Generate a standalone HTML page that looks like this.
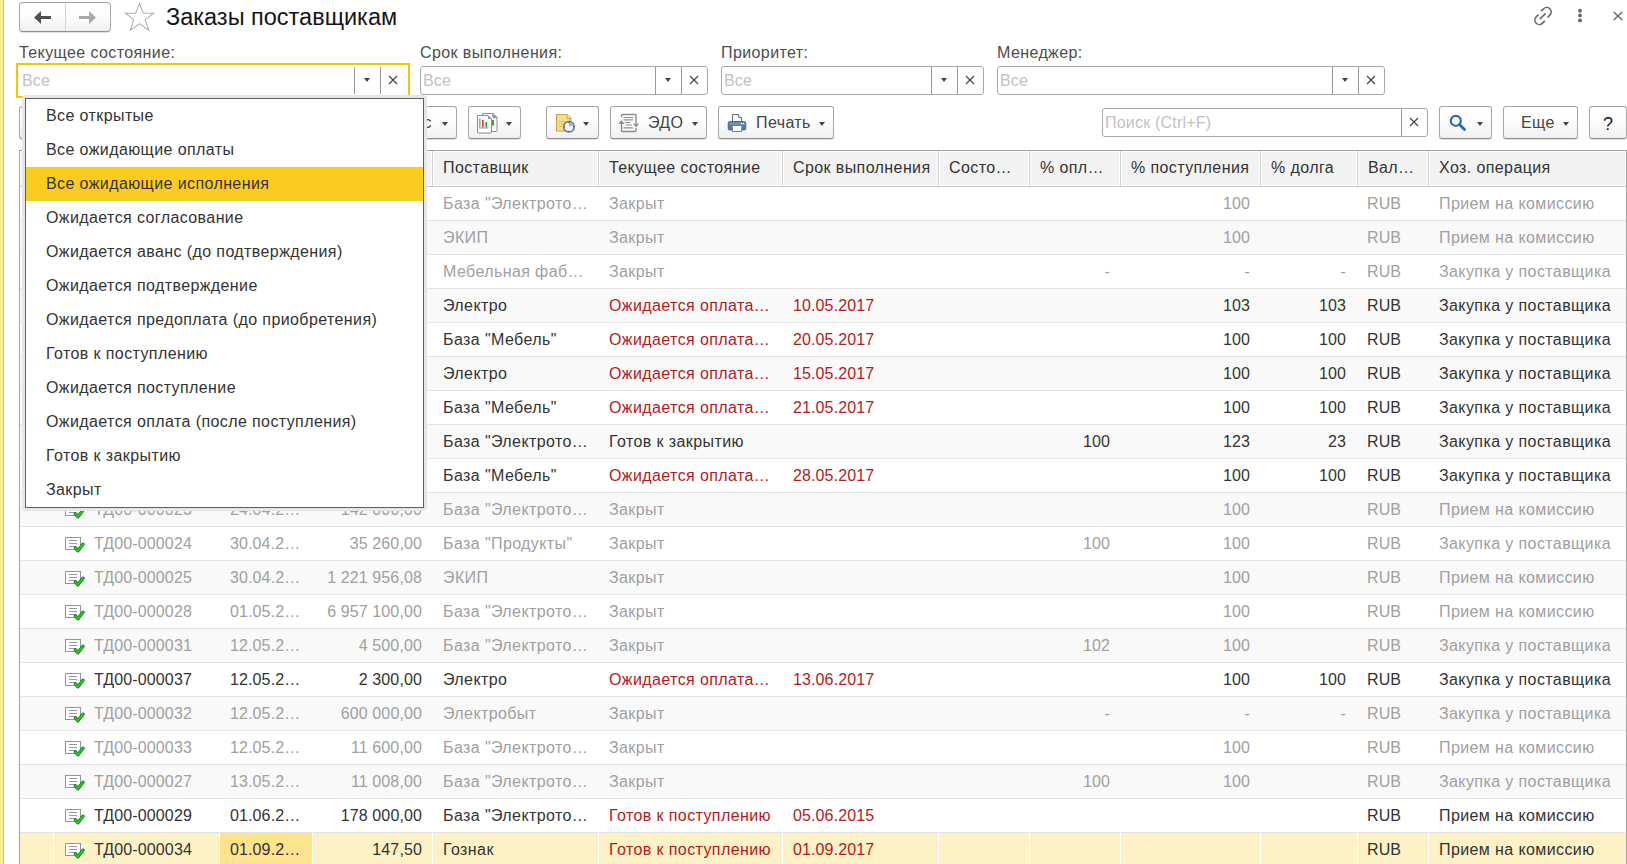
<!DOCTYPE html>
<html><head><meta charset="utf-8"><title>Заказы поставщикам</title>
<style>
*{box-sizing:border-box;margin:0;padding:0}
html,body{width:1627px;height:864px;overflow:hidden;background:#fff}
body{position:relative;font-family:"Liberation Sans",sans-serif;font-size:16px;color:#333}
.abs{position:absolute}
.t{position:absolute;white-space:nowrap;letter-spacing:0.4px;line-height:20px}
.n{letter-spacing:0.12px}
.lbl{position:absolute;white-space:nowrap;letter-spacing:0.4px;color:#4d4d4d;line-height:20px}
.fld{position:absolute;border:1px solid #a8a8a8;border-radius:3px;background:#fff;height:29px}
.fld .ph{position:absolute;left:2px;top:4px;color:#c2c2c2;letter-spacing:0.2px;line-height:20px}
.fld .dv{position:absolute;top:1px;width:1px;height:25px;background:#9a9a9a}
.tri{position:absolute;width:0;height:0;border-left:3px solid transparent;border-right:3px solid transparent;border-top:4px solid #444}
.btn{position:absolute;border:1px solid #a6a6a6;border-bottom-color:#8f8f8f;border-radius:3px;background:linear-gradient(#fff 0%,#fdfdfd 45%,#f0f0f0 100%);box-shadow:0 1px 0 rgba(0,0,0,0.12);height:33px}
.btn .bt{position:absolute;top:6px;white-space:nowrap;color:#444;letter-spacing:0.4px;line-height:20px}
.hdr{position:absolute;top:151px;height:35px;background:#f2f2f2;border:1px solid #fff}
.hsep{position:absolute;top:151px;width:1px;height:35px;background:#d0d0d0}
.row{position:absolute;left:20px;width:1606px;height:34px}
.g{color:#a0a0a0}
.k{color:#333}
.r{color:#b5191d}
</style></head><body>

<div class="abs" style="left:0;top:0;width:3px;height:864px;background:#fbeb9b"></div>
<div class="abs" style="left:3px;top:0;width:1px;height:864px;background:#cfc487"></div>
<div class="btn" style="left:19px;top:2px;width:92px;height:30px;border-radius:4px"></div>
<div class="abs" style="left:65px;top:3px;width:1px;height:28px;background:#d6d6d6"></div>
<svg class="abs" style="left:33px;top:10px" width="20" height="15" viewBox="0 0 20 15"><path d="M1 7.5 L8 1 L8 6 L18 6 L18 9 L8 9 L8 14 Z" fill="#505050"/></svg>
<svg class="abs" style="left:78px;top:10px" width="20" height="15" viewBox="0 0 20 15"><path d="M18 7.5 L11 1 L11 6 L1 6 L1 9 L11 9 L11 14 Z" fill="#a8a8a8"/></svg>
<svg class="abs" style="left:124px;top:2px" width="32" height="30" viewBox="0 0 32 30"><path d="M15.5 1.5 L19.2 11.3 L29.5 11.3 L21.3 17.6 L24.6 28.2 L15.5 21.7 L6.4 28.2 L9.7 17.6 L1.5 11.3 L11.8 11.3 Z" fill="none" stroke="#a9b1b9" stroke-width="1.1"/></svg>
<div class="t" style="left:166px;top:3px;font-size:23.5px;line-height:28px;color:#141414;letter-spacing:0">Заказы поставщикам</div>
<svg class="abs" style="left:1532px;top:5px" width="22" height="22" viewBox="0 0 22 22"><g transform="translate(11 11) scale(0.88) translate(-10.75 -10.7)" fill="none" stroke="#6a6a6a" stroke-width="1.9" stroke-linecap="butt"><path d="M8.5 5.2 L11.3 2.6 A3.6 3.6 0 0 1 18.6 9.6 L16 12.2"/><path d="M12.8 16.2 L10.2 18.8 A3.6 3.6 0 0 1 2.9 11.8 L5.5 9.2"/><path d="M7.2 14.2 L13.8 7.6"/></g></svg>
<svg class="abs" style="left:1576px;top:7px" width="8" height="17" viewBox="0 0 8 17"><circle cx="4" cy="3.7" r="1.95" fill="#6a6a6a"/><circle cx="4" cy="8.4" r="1.95" fill="#6a6a6a"/><circle cx="4" cy="13.4" r="1.95" fill="#6a6a6a"/></svg>
<svg class="abs" style="left:1612px;top:10px" width="12" height="12" viewBox="0 0 12 12"><path d="M1.8 1.9 L10.2 10.1 M10.2 1.9 L1.8 10.1" stroke="#6a6a6a" stroke-width="1.4"/></svg>
<div class="lbl" style="left:19px;top:43px">Текущее состояние:</div>
<div class="lbl" style="left:420px;top:43px">Срок выполнения:</div>
<div class="lbl" style="left:721px;top:43px">Приоритет:</div>
<div class="lbl" style="left:997px;top:43px">Менеджер:</div>
<div class="abs" style="left:16px;top:63px;width:394px;height:35px;border:2px solid #f8c600;background:#fff"></div>
<div class="abs" style="left:22px;top:71px;color:#c2c2c2;letter-spacing:0.2px;line-height:20px">Все</div>
<div class="abs" style="left:354px;top:67px;width:1px;height:27px;background:#9a9a9a"></div>
<div class="abs" style="left:380px;top:67px;width:1px;height:27px;background:#9a9a9a"></div>
<div class="tri" style="left:364px;top:78px"></div>
<svg class="abs" style="left:388px;top:75px" width="10" height="10" viewBox="0 0 10 10"><path d="M1 1 L9 9 M9 1 L1 9" stroke="#444" stroke-width="1.15"/></svg>
<div class="fld" style="left:420px;top:66px;width:288px"><div class="ph">Все</div></div>
<div class="abs" style="left:655px;top:67px;width:1px;height:27px;background:#9a9a9a"></div>
<div class="abs" style="left:681px;top:67px;width:1px;height:27px;background:#9a9a9a"></div>
<div class="tri" style="left:665px;top:78px"></div>
<svg class="abs" style="left:689px;top:75px" width="10" height="10" viewBox="0 0 10 10"><path d="M1 1 L9 9 M9 1 L1 9" stroke="#444" stroke-width="1.15"/></svg>
<div class="fld" style="left:721px;top:66px;width:263px"><div class="ph">Все</div></div>
<div class="abs" style="left:931px;top:67px;width:1px;height:27px;background:#9a9a9a"></div>
<div class="abs" style="left:957px;top:67px;width:1px;height:27px;background:#9a9a9a"></div>
<div class="tri" style="left:941px;top:78px"></div>
<svg class="abs" style="left:965px;top:75px" width="10" height="10" viewBox="0 0 10 10"><path d="M1 1 L9 9 M9 1 L1 9" stroke="#444" stroke-width="1.15"/></svg>
<div class="fld" style="left:997px;top:66px;width:388px"><div class="ph">Все</div></div>
<div class="abs" style="left:1332px;top:67px;width:1px;height:27px;background:#9a9a9a"></div>
<div class="abs" style="left:1358px;top:67px;width:1px;height:27px;background:#9a9a9a"></div>
<div class="tri" style="left:1342px;top:78px"></div>
<svg class="abs" style="left:1366px;top:75px" width="10" height="10" viewBox="0 0 10 10"><path d="M1 1 L9 9 M9 1 L1 9" stroke="#444" stroke-width="1.15"/></svg>
<div class="btn" style="left:19px;top:106px;width:438px"><div class="bt" style="right:24px">Статус</div><div class="tri" style="left:422px;top:15px"></div></div>
<div class="btn" style="left:468px;top:106px;width:53px"><div class="tri" style="left:37px;top:15px"></div></div>
<div class="btn" style="left:546px;top:106px;width:53px"><div class="tri" style="left:36px;top:15px"></div></div>
<div class="btn" style="left:610px;top:106px;width:97px"><div class="bt" style="left:37px">ЭДО</div><div class="tri" style="left:81px;top:15px"></div></div>
<div class="btn" style="left:718px;top:106px;width:116px"><div class="bt" style="left:37px">Печать</div><div class="tri" style="left:100px;top:15px"></div></div>
<div class="btn" style="left:1439px;top:106px;width:53px"><div class="tri" style="left:37px;top:15px"></div></div>
<div class="btn" style="left:1503px;top:106px;width:75px"><div class="bt" style="left:17px">Еще</div><div class="tri" style="left:59px;top:15px"></div></div>
<div class="btn" style="left:1589px;top:106px;width:38px"><div class="bt" style="left:13px;top:7px;color:#1a1a1a;font-size:18px;letter-spacing:0">?</div></div>
<svg class="abs" style="left:476px;top:112px" width="23" height="22" viewBox="0 0 23 22">
<path d="M6.5 1.5 H17 L21 5.5 V18.5 Q21 19.5 20 19.5 H7.5 Q6.5 19.5 6.5 18.5 Z" fill="#fff" stroke="#7f8e9c" stroke-width="1"/>
<path d="M17 1.5 V5.5 H21" fill="#8a98a6" stroke="#7f8e9c" stroke-width="1"/>
<rect x="16" y="8" width="2" height="6" fill="#3ea33e"/><rect x="14" y="13" width="5" height="1" fill="#bbb"/>
<path d="M1.5 3.5 H12 L15.5 7 V20 Q15.5 21 14.5 21 H2.5 Q1.5 21 1.5 20 Z" fill="#fff" stroke="#7f8e9c" stroke-width="1"/>
<path d="M12 3.5 V7 H15.5 Z" fill="#8a98a6"/>
<rect x="3" y="6.5" width="1.6" height="9" fill="#a4a4a4"/>
<rect x="6" y="8" width="1.6" height="7.5" fill="#e8352a"/>
<rect x="9.5" y="10" width="1.6" height="5.5" fill="#2fa22f"/>
<rect x="3" y="15.5" width="9" height="1" fill="#999"/>
</svg>
<svg class="abs" style="left:555px;top:113px" width="22" height="20" viewBox="0 0 22 20">
<path d="M1.5 1.5 H12 L16 5.5 V17 Q16 18 15 18 H2.5 Q1.5 18 1.5 17 Z" fill="#f3df8c" stroke="#c9a746" stroke-width="1.2"/>
<path d="M12 1.5 V5.5 H16" fill="#f7e9ab" stroke="#c9a746" stroke-width="1"/>
<path d="M4 8.5 H6 M7 8.5 H10 M4 11 H5 M6 11 H8 M4 13.5 H7" stroke="#cdb56a" stroke-width="0.9"/>
<circle cx="14" cy="13.8" r="5.3" fill="#fff" stroke="#3d79b0" stroke-width="1.4"/>
<path d="M14 13.8 V9.5 A4.3 4.3 0 0 1 18.1 12.6 Z" fill="#9bb8df"/>
<circle cx="14" cy="9.3" r="0.9" fill="#e03a3a"/><circle cx="14" cy="18.3" r="0.9" fill="#e03a3a"/>
<circle cx="9.5" cy="13.8" r="0.9" fill="#e03a3a"/><circle cx="18.5" cy="13.8" r="0.9" fill="#e03a3a"/>
</svg>
<svg class="abs" style="left:618px;top:113px" width="22" height="20" viewBox="0 0 22 20">
<g fill="none" stroke="#8c8c8c" stroke-width="1.4">
<path d="M3.5 4 V2.5 Q3.5 1.5 4.5 1.5 H17 Q18 1.5 18 2.5 V10"/>
<path d="M18 15 V17.5 Q18 18.5 17 18.5 H4.5 Q3.5 18.5 3.5 17.5 V10"/>
</g>
<path d="M0.5 11 L3.5 7 L6.5 11 Z" fill="#8c8c8c"/>
<path d="M15 10.5 L18 14.5 L21 10.5 Z" fill="#8c8c8c"/>
<path d="M5.5 4.5 H15 M5.5 6.8 H15 M7 9.5 H12.5 M7.5 12 H14 M5.5 14.8 H15" stroke="#8f8f8f" stroke-width="1.2"/>
</svg>
<svg class="abs" style="left:727px;top:113px" width="20" height="20" viewBox="0 0 20 20">
<path d="M5.5 1.5 H11.5 L14.5 4.5 V9 H5.5 Z" fill="#fff" stroke="#5a6f86" stroke-width="1"/>
<path d="M11.5 1.5 V4.5 H14.5" fill="#fff" stroke="#5a6f86" stroke-width="0.9"/>
<rect x="1.2" y="8.5" width="17.6" height="8.5" rx="1.5" fill="#5479a3" stroke="#3f5f85" stroke-width="0.8"/>
<rect x="2.5" y="9.5" width="15" height="2.5" fill="#6f93bb"/>
<circle cx="14.4" cy="10.5" r="0.8" fill="#fff"/><circle cx="16.4" cy="10.5" r="0.8" fill="#fff"/>
<path d="M5 12.5 H15 L14.5 18.5 H5.5 Z" fill="#fff" stroke="#5a6f86" stroke-width="0.9"/>
</svg>
<svg class="abs" style="left:1449px;top:114px" width="18" height="18" viewBox="0 0 18 18">
<circle cx="6.8" cy="6.8" r="5" fill="none" stroke="#2a6aa6" stroke-width="2.2"/>
<path d="M10.5 10.5 L15.5 15.5" stroke="#2a6aa6" stroke-width="2.8" stroke-linecap="round"/>
</svg>
<div class="fld" style="left:1102px;top:108px;width:326px;height:29px"><div class="ph" style="left:2px;top:4px">Поиск (Ctrl+F)</div></div>
<div class="abs" style="left:1401px;top:109px;width:1px;height:27px;background:#9a9a9a"></div>
<svg class="abs" style="left:1409px;top:117px" width="10" height="10" viewBox="0 0 10 10"><path d="M1 1 L9 9 M9 1 L1 9" stroke="#444" stroke-width="1.15"/></svg>
<div class="abs" style="left:19px;top:150px;width:1608px;height:724px;border:1px solid #a2a2a2;border-bottom:none;background:#fff"></div>
<div class="hdr" style="left:20px;width:33px"></div>
<div class="hdr" style="left:54px;width:165px"></div>
<div class="hdr" style="left:220px;width:92px"></div>
<div class="hdr" style="left:313px;width:119px"></div>
<div class="hdr" style="left:433px;width:165px"></div>
<div class="hdr" style="left:599px;width:183px"></div>
<div class="hdr" style="left:783px;width:155px"></div>
<div class="hdr" style="left:939px;width:90px"></div>
<div class="hdr" style="left:1030px;width:90px"></div>
<div class="hdr" style="left:1121px;width:139px"></div>
<div class="hdr" style="left:1261px;width:96px"></div>
<div class="hdr" style="left:1358px;width:70px"></div>
<div class="hdr" style="left:1429px;width:197px"></div>
<div class="hsep" style="left:53px"></div>
<div class="hsep" style="left:219px"></div>
<div class="hsep" style="left:312px"></div>
<div class="hsep" style="left:432px"></div>
<div class="hsep" style="left:598px"></div>
<div class="hsep" style="left:782px"></div>
<div class="hsep" style="left:938px"></div>
<div class="hsep" style="left:1029px"></div>
<div class="hsep" style="left:1120px"></div>
<div class="hsep" style="left:1260px"></div>
<div class="hsep" style="left:1357px"></div>
<div class="hsep" style="left:1428px"></div>
<div class="abs" style="left:20px;top:186px;width:1606px;height:1px;background:#c9c9c9"></div>
<div class="t" style="left:443px;top:158px;color:#333">Поставщик</div>
<div class="t" style="left:609px;top:158px;color:#333">Текущее состояние</div>
<div class="t" style="left:793px;top:158px;color:#333">Срок выполнения</div>
<div class="t" style="left:949px;top:158px;color:#333">Состо…</div>
<div class="t" style="left:1040px;top:158px;color:#333">% опл…</div>
<div class="t" style="left:1131px;top:158px;color:#333">% поступления</div>
<div class="t" style="left:1271px;top:158px;color:#333">% долга</div>
<div class="t" style="left:1368px;top:158px;color:#333">Вал…</div>
<div class="t" style="left:1439px;top:158px;color:#333">Хоз. операция</div>
<div class="t" style="left:64px;top:158px;color:#333">Номер</div>
<div class="t" style="left:230px;top:158px;color:#333">Дата</div>
<div class="t" style="left:323px;top:158px;color:#333">Сумма</div>
<div class="abs" style="left:20px;top:187px;width:1606px;height:33px;background:#fff"></div>
<div class="abs" style="left:20px;top:220px;width:1606px;height:1px;background:#e4e4e4"></div>
<svg class="abs" style="left:65px;top:197px" width="21" height="16" viewBox="0 0 21 16"><rect x="0.5" y="0.5" width="15" height="12" fill="#fff" stroke="#8797ad" stroke-width="1"/><path d="M4 3.5 H12 M4 6.5 H12 M4 9.5 H10" stroke="#8e9aab" stroke-width="1.1"/><path d="M10.5 10.9 L12.9 13.7 L18 7.3" fill="none" stroke="#0c7d0c" stroke-width="3.4" stroke-linecap="round" stroke-linejoin="round"/><path d="M10.5 10.9 L12.9 13.7 L18 7.3" fill="none" stroke="#2cc22c" stroke-width="2" stroke-linecap="round" stroke-linejoin="round"/></svg>
<div class="t n g" style="left:94px;top:194px">ТД00-000019</div>
<div class="t n g" style="left:230px;top:194px">19.04.2…</div>
<div class="t n g" style="right:1205px;top:194px">50 000,00</div>
<div class="t g" style="left:443px;top:194px">База &quot;Электрото…</div>
<div class="t g" style="left:609px;top:194px">Закрыт</div>
<div class="t n g" style="right:377px;top:194px">100</div>
<div class="t n g" style="left:1367px;top:194px">RUB</div>
<div class="t g" style="left:1439px;top:194px">Прием на комиссию</div>
<div class="abs" style="left:20px;top:221px;width:1606px;height:33px;background:#f9f9f9"></div>
<div class="abs" style="left:20px;top:254px;width:1606px;height:1px;background:#e4e4e4"></div>
<svg class="abs" style="left:65px;top:231px" width="21" height="16" viewBox="0 0 21 16"><rect x="0.5" y="0.5" width="15" height="12" fill="#fff" stroke="#8797ad" stroke-width="1"/><path d="M4 3.5 H12 M4 6.5 H12 M4 9.5 H10" stroke="#8e9aab" stroke-width="1.1"/><path d="M10.5 10.9 L12.9 13.7 L18 7.3" fill="none" stroke="#0c7d0c" stroke-width="3.4" stroke-linecap="round" stroke-linejoin="round"/><path d="M10.5 10.9 L12.9 13.7 L18 7.3" fill="none" stroke="#2cc22c" stroke-width="2" stroke-linecap="round" stroke-linejoin="round"/></svg>
<div class="t n g" style="left:94px;top:228px">ТД00-000020</div>
<div class="t n g" style="left:230px;top:228px">20.04.2…</div>
<div class="t n g" style="right:1205px;top:228px">12 000,00</div>
<div class="t g" style="left:443px;top:228px">ЭКИП</div>
<div class="t g" style="left:609px;top:228px">Закрыт</div>
<div class="t n g" style="right:377px;top:228px">100</div>
<div class="t n g" style="left:1367px;top:228px">RUB</div>
<div class="t g" style="left:1439px;top:228px">Прием на комиссию</div>
<div class="abs" style="left:20px;top:255px;width:1606px;height:33px;background:#fff"></div>
<div class="abs" style="left:20px;top:288px;width:1606px;height:1px;background:#e4e4e4"></div>
<svg class="abs" style="left:65px;top:265px" width="21" height="16" viewBox="0 0 21 16"><rect x="0.5" y="0.5" width="15" height="12" fill="#fff" stroke="#8797ad" stroke-width="1"/><path d="M4 3.5 H12 M4 6.5 H12 M4 9.5 H10" stroke="#8e9aab" stroke-width="1.1"/><path d="M10.5 10.9 L12.9 13.7 L18 7.3" fill="none" stroke="#0c7d0c" stroke-width="3.4" stroke-linecap="round" stroke-linejoin="round"/><path d="M10.5 10.9 L12.9 13.7 L18 7.3" fill="none" stroke="#2cc22c" stroke-width="2" stroke-linecap="round" stroke-linejoin="round"/></svg>
<div class="t n g" style="left:94px;top:262px">ТД00-000021</div>
<div class="t n g" style="left:230px;top:262px">21.04.2…</div>
<div class="t n g" style="right:1205px;top:262px">8 000,00</div>
<div class="t g" style="left:443px;top:262px">Мебельная фаб…</div>
<div class="t g" style="left:609px;top:262px">Закрыт</div>
<div class="t n g" style="right:517px;top:262px">-</div>
<div class="t n g" style="right:377px;top:262px">-</div>
<div class="t n g" style="right:281px;top:262px">-</div>
<div class="t n g" style="left:1367px;top:262px">RUB</div>
<div class="t g" style="left:1439px;top:262px">Закупка у поставщика</div>
<div class="abs" style="left:20px;top:289px;width:1606px;height:33px;background:#f9f9f9"></div>
<div class="abs" style="left:20px;top:322px;width:1606px;height:1px;background:#e4e4e4"></div>
<svg class="abs" style="left:65px;top:299px" width="21" height="16" viewBox="0 0 21 16"><rect x="0.5" y="0.5" width="15" height="12" fill="#fff" stroke="#8797ad" stroke-width="1"/><path d="M4 3.5 H12 M4 6.5 H12 M4 9.5 H10" stroke="#8e9aab" stroke-width="1.1"/><path d="M10.5 10.9 L12.9 13.7 L18 7.3" fill="none" stroke="#0c7d0c" stroke-width="3.4" stroke-linecap="round" stroke-linejoin="round"/><path d="M10.5 10.9 L12.9 13.7 L18 7.3" fill="none" stroke="#2cc22c" stroke-width="2" stroke-linecap="round" stroke-linejoin="round"/></svg>
<div class="t n k" style="left:94px;top:296px">ТД00-000001</div>
<div class="t n k" style="left:230px;top:296px">22.04.2…</div>
<div class="t n k" style="right:1205px;top:296px">10 000,00</div>
<div class="t k" style="left:443px;top:296px">Электро</div>
<div class="t r" style="left:609px;top:296px">Ожидается оплата…</div>
<div class="t n r" style="left:793px;top:296px">10.05.2017</div>
<div class="t n k" style="right:377px;top:296px">103</div>
<div class="t n k" style="right:281px;top:296px">103</div>
<div class="t n k" style="left:1367px;top:296px">RUB</div>
<div class="t k" style="left:1439px;top:296px">Закупка у поставщика</div>
<div class="abs" style="left:20px;top:323px;width:1606px;height:33px;background:#fff"></div>
<div class="abs" style="left:20px;top:356px;width:1606px;height:1px;background:#e4e4e4"></div>
<svg class="abs" style="left:65px;top:333px" width="21" height="16" viewBox="0 0 21 16"><rect x="0.5" y="0.5" width="15" height="12" fill="#fff" stroke="#8797ad" stroke-width="1"/><path d="M4 3.5 H12 M4 6.5 H12 M4 9.5 H10" stroke="#8e9aab" stroke-width="1.1"/><path d="M10.5 10.9 L12.9 13.7 L18 7.3" fill="none" stroke="#0c7d0c" stroke-width="3.4" stroke-linecap="round" stroke-linejoin="round"/><path d="M10.5 10.9 L12.9 13.7 L18 7.3" fill="none" stroke="#2cc22c" stroke-width="2" stroke-linecap="round" stroke-linejoin="round"/></svg>
<div class="t n k" style="left:94px;top:330px">ТД00-000002</div>
<div class="t n k" style="left:230px;top:330px">22.04.2…</div>
<div class="t n k" style="right:1205px;top:330px">10 000,00</div>
<div class="t k" style="left:443px;top:330px">База &quot;Мебель&quot;</div>
<div class="t r" style="left:609px;top:330px">Ожидается оплата…</div>
<div class="t n r" style="left:793px;top:330px">20.05.2017</div>
<div class="t n k" style="right:377px;top:330px">100</div>
<div class="t n k" style="right:281px;top:330px">100</div>
<div class="t n k" style="left:1367px;top:330px">RUB</div>
<div class="t k" style="left:1439px;top:330px">Закупка у поставщика</div>
<div class="abs" style="left:20px;top:357px;width:1606px;height:33px;background:#f9f9f9"></div>
<div class="abs" style="left:20px;top:390px;width:1606px;height:1px;background:#e4e4e4"></div>
<svg class="abs" style="left:65px;top:367px" width="21" height="16" viewBox="0 0 21 16"><rect x="0.5" y="0.5" width="15" height="12" fill="#fff" stroke="#8797ad" stroke-width="1"/><path d="M4 3.5 H12 M4 6.5 H12 M4 9.5 H10" stroke="#8e9aab" stroke-width="1.1"/><path d="M10.5 10.9 L12.9 13.7 L18 7.3" fill="none" stroke="#0c7d0c" stroke-width="3.4" stroke-linecap="round" stroke-linejoin="round"/><path d="M10.5 10.9 L12.9 13.7 L18 7.3" fill="none" stroke="#2cc22c" stroke-width="2" stroke-linecap="round" stroke-linejoin="round"/></svg>
<div class="t n k" style="left:94px;top:364px">ТД00-000003</div>
<div class="t n k" style="left:230px;top:364px">22.04.2…</div>
<div class="t n k" style="right:1205px;top:364px">10 000,00</div>
<div class="t k" style="left:443px;top:364px">Электро</div>
<div class="t r" style="left:609px;top:364px">Ожидается оплата…</div>
<div class="t n r" style="left:793px;top:364px">15.05.2017</div>
<div class="t n k" style="right:377px;top:364px">100</div>
<div class="t n k" style="right:281px;top:364px">100</div>
<div class="t n k" style="left:1367px;top:364px">RUB</div>
<div class="t k" style="left:1439px;top:364px">Закупка у поставщика</div>
<div class="abs" style="left:20px;top:391px;width:1606px;height:33px;background:#fff"></div>
<div class="abs" style="left:20px;top:424px;width:1606px;height:1px;background:#e4e4e4"></div>
<svg class="abs" style="left:65px;top:401px" width="21" height="16" viewBox="0 0 21 16"><rect x="0.5" y="0.5" width="15" height="12" fill="#fff" stroke="#8797ad" stroke-width="1"/><path d="M4 3.5 H12 M4 6.5 H12 M4 9.5 H10" stroke="#8e9aab" stroke-width="1.1"/><path d="M10.5 10.9 L12.9 13.7 L18 7.3" fill="none" stroke="#0c7d0c" stroke-width="3.4" stroke-linecap="round" stroke-linejoin="round"/><path d="M10.5 10.9 L12.9 13.7 L18 7.3" fill="none" stroke="#2cc22c" stroke-width="2" stroke-linecap="round" stroke-linejoin="round"/></svg>
<div class="t n k" style="left:94px;top:398px">ТД00-000004</div>
<div class="t n k" style="left:230px;top:398px">22.04.2…</div>
<div class="t n k" style="right:1205px;top:398px">10 000,00</div>
<div class="t k" style="left:443px;top:398px">База &quot;Мебель&quot;</div>
<div class="t r" style="left:609px;top:398px">Ожидается оплата…</div>
<div class="t n r" style="left:793px;top:398px">21.05.2017</div>
<div class="t n k" style="right:377px;top:398px">100</div>
<div class="t n k" style="right:281px;top:398px">100</div>
<div class="t n k" style="left:1367px;top:398px">RUB</div>
<div class="t k" style="left:1439px;top:398px">Закупка у поставщика</div>
<div class="abs" style="left:20px;top:425px;width:1606px;height:33px;background:#f9f9f9"></div>
<div class="abs" style="left:20px;top:458px;width:1606px;height:1px;background:#e4e4e4"></div>
<svg class="abs" style="left:65px;top:435px" width="21" height="16" viewBox="0 0 21 16"><rect x="0.5" y="0.5" width="15" height="12" fill="#fff" stroke="#8797ad" stroke-width="1"/><path d="M4 3.5 H12 M4 6.5 H12 M4 9.5 H10" stroke="#8e9aab" stroke-width="1.1"/><path d="M10.5 10.9 L12.9 13.7 L18 7.3" fill="none" stroke="#0c7d0c" stroke-width="3.4" stroke-linecap="round" stroke-linejoin="round"/><path d="M10.5 10.9 L12.9 13.7 L18 7.3" fill="none" stroke="#2cc22c" stroke-width="2" stroke-linecap="round" stroke-linejoin="round"/></svg>
<div class="t n k" style="left:94px;top:432px">ТД00-000005</div>
<div class="t n k" style="left:230px;top:432px">22.04.2…</div>
<div class="t n k" style="right:1205px;top:432px">10 000,00</div>
<div class="t k" style="left:443px;top:432px">База &quot;Электрото…</div>
<div class="t k" style="left:609px;top:432px">Готов к закрытию</div>
<div class="t n k" style="right:517px;top:432px">100</div>
<div class="t n k" style="right:377px;top:432px">123</div>
<div class="t n k" style="right:281px;top:432px">23</div>
<div class="t n k" style="left:1367px;top:432px">RUB</div>
<div class="t k" style="left:1439px;top:432px">Закупка у поставщика</div>
<div class="abs" style="left:20px;top:459px;width:1606px;height:33px;background:#fff"></div>
<div class="abs" style="left:20px;top:492px;width:1606px;height:1px;background:#e4e4e4"></div>
<svg class="abs" style="left:65px;top:469px" width="21" height="16" viewBox="0 0 21 16"><rect x="0.5" y="0.5" width="15" height="12" fill="#fff" stroke="#8797ad" stroke-width="1"/><path d="M4 3.5 H12 M4 6.5 H12 M4 9.5 H10" stroke="#8e9aab" stroke-width="1.1"/><path d="M10.5 10.9 L12.9 13.7 L18 7.3" fill="none" stroke="#0c7d0c" stroke-width="3.4" stroke-linecap="round" stroke-linejoin="round"/><path d="M10.5 10.9 L12.9 13.7 L18 7.3" fill="none" stroke="#2cc22c" stroke-width="2" stroke-linecap="round" stroke-linejoin="round"/></svg>
<div class="t n k" style="left:94px;top:466px">ТД00-000006</div>
<div class="t n k" style="left:230px;top:466px">22.04.2…</div>
<div class="t n k" style="right:1205px;top:466px">10 000,00</div>
<div class="t k" style="left:443px;top:466px">База &quot;Мебель&quot;</div>
<div class="t r" style="left:609px;top:466px">Ожидается оплата…</div>
<div class="t n r" style="left:793px;top:466px">28.05.2017</div>
<div class="t n k" style="right:377px;top:466px">100</div>
<div class="t n k" style="right:281px;top:466px">100</div>
<div class="t n k" style="left:1367px;top:466px">RUB</div>
<div class="t k" style="left:1439px;top:466px">Закупка у поставщика</div>
<div class="abs" style="left:20px;top:493px;width:1606px;height:33px;background:#f9f9f9"></div>
<div class="abs" style="left:20px;top:526px;width:1606px;height:1px;background:#e4e4e4"></div>
<svg class="abs" style="left:65px;top:503px" width="21" height="16" viewBox="0 0 21 16"><rect x="0.5" y="0.5" width="15" height="12" fill="#fff" stroke="#8797ad" stroke-width="1"/><path d="M4 3.5 H12 M4 6.5 H12 M4 9.5 H10" stroke="#8e9aab" stroke-width="1.1"/><path d="M10.5 10.9 L12.9 13.7 L18 7.3" fill="none" stroke="#0c7d0c" stroke-width="3.4" stroke-linecap="round" stroke-linejoin="round"/><path d="M10.5 10.9 L12.9 13.7 L18 7.3" fill="none" stroke="#2cc22c" stroke-width="2" stroke-linecap="round" stroke-linejoin="round"/></svg>
<div class="t n g" style="left:94px;top:500px">ТД00-000023</div>
<div class="t n g" style="left:230px;top:500px">24.04.2…</div>
<div class="t n g" style="right:1205px;top:500px">142 000,00</div>
<div class="t g" style="left:443px;top:500px">База &quot;Электрото…</div>
<div class="t g" style="left:609px;top:500px">Закрыт</div>
<div class="t n g" style="right:377px;top:500px">100</div>
<div class="t n g" style="left:1367px;top:500px">RUB</div>
<div class="t g" style="left:1439px;top:500px">Прием на комиссию</div>
<div class="abs" style="left:20px;top:527px;width:1606px;height:33px;background:#fff"></div>
<div class="abs" style="left:20px;top:560px;width:1606px;height:1px;background:#e4e4e4"></div>
<svg class="abs" style="left:65px;top:537px" width="21" height="16" viewBox="0 0 21 16"><rect x="0.5" y="0.5" width="15" height="12" fill="#fff" stroke="#8797ad" stroke-width="1"/><path d="M4 3.5 H12 M4 6.5 H12 M4 9.5 H10" stroke="#8e9aab" stroke-width="1.1"/><path d="M10.5 10.9 L12.9 13.7 L18 7.3" fill="none" stroke="#0c7d0c" stroke-width="3.4" stroke-linecap="round" stroke-linejoin="round"/><path d="M10.5 10.9 L12.9 13.7 L18 7.3" fill="none" stroke="#2cc22c" stroke-width="2" stroke-linecap="round" stroke-linejoin="round"/></svg>
<div class="t n g" style="left:94px;top:534px">ТД00-000024</div>
<div class="t n g" style="left:230px;top:534px">30.04.2…</div>
<div class="t n g" style="right:1205px;top:534px">35 260,00</div>
<div class="t g" style="left:443px;top:534px">База &quot;Продукты&quot;</div>
<div class="t g" style="left:609px;top:534px">Закрыт</div>
<div class="t n g" style="right:517px;top:534px">100</div>
<div class="t n g" style="right:377px;top:534px">100</div>
<div class="t n g" style="left:1367px;top:534px">RUB</div>
<div class="t g" style="left:1439px;top:534px">Закупка у поставщика</div>
<div class="abs" style="left:20px;top:561px;width:1606px;height:33px;background:#f9f9f9"></div>
<div class="abs" style="left:20px;top:594px;width:1606px;height:1px;background:#e4e4e4"></div>
<svg class="abs" style="left:65px;top:571px" width="21" height="16" viewBox="0 0 21 16"><rect x="0.5" y="0.5" width="15" height="12" fill="#fff" stroke="#8797ad" stroke-width="1"/><path d="M4 3.5 H12 M4 6.5 H12 M4 9.5 H10" stroke="#8e9aab" stroke-width="1.1"/><path d="M10.5 10.9 L12.9 13.7 L18 7.3" fill="none" stroke="#0c7d0c" stroke-width="3.4" stroke-linecap="round" stroke-linejoin="round"/><path d="M10.5 10.9 L12.9 13.7 L18 7.3" fill="none" stroke="#2cc22c" stroke-width="2" stroke-linecap="round" stroke-linejoin="round"/></svg>
<div class="t n g" style="left:94px;top:568px">ТД00-000025</div>
<div class="t n g" style="left:230px;top:568px">30.04.2…</div>
<div class="t n g" style="right:1205px;top:568px">1 221 956,08</div>
<div class="t g" style="left:443px;top:568px">ЭКИП</div>
<div class="t g" style="left:609px;top:568px">Закрыт</div>
<div class="t n g" style="right:377px;top:568px">100</div>
<div class="t n g" style="left:1367px;top:568px">RUB</div>
<div class="t g" style="left:1439px;top:568px">Прием на комиссию</div>
<div class="abs" style="left:20px;top:595px;width:1606px;height:33px;background:#fff"></div>
<div class="abs" style="left:20px;top:628px;width:1606px;height:1px;background:#e4e4e4"></div>
<svg class="abs" style="left:65px;top:605px" width="21" height="16" viewBox="0 0 21 16"><rect x="0.5" y="0.5" width="15" height="12" fill="#fff" stroke="#8797ad" stroke-width="1"/><path d="M4 3.5 H12 M4 6.5 H12 M4 9.5 H10" stroke="#8e9aab" stroke-width="1.1"/><path d="M10.5 10.9 L12.9 13.7 L18 7.3" fill="none" stroke="#0c7d0c" stroke-width="3.4" stroke-linecap="round" stroke-linejoin="round"/><path d="M10.5 10.9 L12.9 13.7 L18 7.3" fill="none" stroke="#2cc22c" stroke-width="2" stroke-linecap="round" stroke-linejoin="round"/></svg>
<div class="t n g" style="left:94px;top:602px">ТД00-000028</div>
<div class="t n g" style="left:230px;top:602px">01.05.2…</div>
<div class="t n g" style="right:1205px;top:602px">6 957 100,00</div>
<div class="t g" style="left:443px;top:602px">База &quot;Электрото…</div>
<div class="t g" style="left:609px;top:602px">Закрыт</div>
<div class="t n g" style="right:377px;top:602px">100</div>
<div class="t n g" style="left:1367px;top:602px">RUB</div>
<div class="t g" style="left:1439px;top:602px">Прием на комиссию</div>
<div class="abs" style="left:20px;top:629px;width:1606px;height:33px;background:#f9f9f9"></div>
<div class="abs" style="left:20px;top:662px;width:1606px;height:1px;background:#e4e4e4"></div>
<svg class="abs" style="left:65px;top:639px" width="21" height="16" viewBox="0 0 21 16"><rect x="0.5" y="0.5" width="15" height="12" fill="#fff" stroke="#8797ad" stroke-width="1"/><path d="M4 3.5 H12 M4 6.5 H12 M4 9.5 H10" stroke="#8e9aab" stroke-width="1.1"/><path d="M10.5 10.9 L12.9 13.7 L18 7.3" fill="none" stroke="#0c7d0c" stroke-width="3.4" stroke-linecap="round" stroke-linejoin="round"/><path d="M10.5 10.9 L12.9 13.7 L18 7.3" fill="none" stroke="#2cc22c" stroke-width="2" stroke-linecap="round" stroke-linejoin="round"/></svg>
<div class="t n g" style="left:94px;top:636px">ТД00-000031</div>
<div class="t n g" style="left:230px;top:636px">12.05.2…</div>
<div class="t n g" style="right:1205px;top:636px">4 500,00</div>
<div class="t g" style="left:443px;top:636px">База &quot;Электрото…</div>
<div class="t g" style="left:609px;top:636px">Закрыт</div>
<div class="t n g" style="right:517px;top:636px">102</div>
<div class="t n g" style="right:377px;top:636px">100</div>
<div class="t n g" style="left:1367px;top:636px">RUB</div>
<div class="t g" style="left:1439px;top:636px">Закупка у поставщика</div>
<div class="abs" style="left:20px;top:663px;width:1606px;height:33px;background:#fff"></div>
<div class="abs" style="left:20px;top:696px;width:1606px;height:1px;background:#e4e4e4"></div>
<svg class="abs" style="left:65px;top:673px" width="21" height="16" viewBox="0 0 21 16"><rect x="0.5" y="0.5" width="15" height="12" fill="#fff" stroke="#8797ad" stroke-width="1"/><path d="M4 3.5 H12 M4 6.5 H12 M4 9.5 H10" stroke="#8e9aab" stroke-width="1.1"/><path d="M10.5 10.9 L12.9 13.7 L18 7.3" fill="none" stroke="#0c7d0c" stroke-width="3.4" stroke-linecap="round" stroke-linejoin="round"/><path d="M10.5 10.9 L12.9 13.7 L18 7.3" fill="none" stroke="#2cc22c" stroke-width="2" stroke-linecap="round" stroke-linejoin="round"/></svg>
<div class="t n k" style="left:94px;top:670px">ТД00-000037</div>
<div class="t n k" style="left:230px;top:670px">12.05.2…</div>
<div class="t n k" style="right:1205px;top:670px">2 300,00</div>
<div class="t k" style="left:443px;top:670px">Электро</div>
<div class="t r" style="left:609px;top:670px">Ожидается оплата…</div>
<div class="t n r" style="left:793px;top:670px">13.06.2017</div>
<div class="t n k" style="right:377px;top:670px">100</div>
<div class="t n k" style="right:281px;top:670px">100</div>
<div class="t n k" style="left:1367px;top:670px">RUB</div>
<div class="t k" style="left:1439px;top:670px">Закупка у поставщика</div>
<div class="abs" style="left:20px;top:697px;width:1606px;height:33px;background:#f9f9f9"></div>
<div class="abs" style="left:20px;top:730px;width:1606px;height:1px;background:#e4e4e4"></div>
<svg class="abs" style="left:65px;top:707px" width="21" height="16" viewBox="0 0 21 16"><rect x="0.5" y="0.5" width="15" height="12" fill="#fff" stroke="#8797ad" stroke-width="1"/><path d="M4 3.5 H12 M4 6.5 H12 M4 9.5 H10" stroke="#8e9aab" stroke-width="1.1"/><path d="M10.5 10.9 L12.9 13.7 L18 7.3" fill="none" stroke="#0c7d0c" stroke-width="3.4" stroke-linecap="round" stroke-linejoin="round"/><path d="M10.5 10.9 L12.9 13.7 L18 7.3" fill="none" stroke="#2cc22c" stroke-width="2" stroke-linecap="round" stroke-linejoin="round"/></svg>
<div class="t n g" style="left:94px;top:704px">ТД00-000032</div>
<div class="t n g" style="left:230px;top:704px">12.05.2…</div>
<div class="t n g" style="right:1205px;top:704px">600 000,00</div>
<div class="t g" style="left:443px;top:704px">Электробыт</div>
<div class="t g" style="left:609px;top:704px">Закрыт</div>
<div class="t n g" style="right:517px;top:704px">-</div>
<div class="t n g" style="right:377px;top:704px">-</div>
<div class="t n g" style="right:281px;top:704px">-</div>
<div class="t n g" style="left:1367px;top:704px">RUB</div>
<div class="t g" style="left:1439px;top:704px">Закупка у поставщика</div>
<div class="abs" style="left:20px;top:731px;width:1606px;height:33px;background:#fff"></div>
<div class="abs" style="left:20px;top:764px;width:1606px;height:1px;background:#e4e4e4"></div>
<svg class="abs" style="left:65px;top:741px" width="21" height="16" viewBox="0 0 21 16"><rect x="0.5" y="0.5" width="15" height="12" fill="#fff" stroke="#8797ad" stroke-width="1"/><path d="M4 3.5 H12 M4 6.5 H12 M4 9.5 H10" stroke="#8e9aab" stroke-width="1.1"/><path d="M10.5 10.9 L12.9 13.7 L18 7.3" fill="none" stroke="#0c7d0c" stroke-width="3.4" stroke-linecap="round" stroke-linejoin="round"/><path d="M10.5 10.9 L12.9 13.7 L18 7.3" fill="none" stroke="#2cc22c" stroke-width="2" stroke-linecap="round" stroke-linejoin="round"/></svg>
<div class="t n g" style="left:94px;top:738px">ТД00-000033</div>
<div class="t n g" style="left:230px;top:738px">12.05.2…</div>
<div class="t n g" style="right:1205px;top:738px">11 600,00</div>
<div class="t g" style="left:443px;top:738px">База &quot;Электрото…</div>
<div class="t g" style="left:609px;top:738px">Закрыт</div>
<div class="t n g" style="right:377px;top:738px">100</div>
<div class="t n g" style="left:1367px;top:738px">RUB</div>
<div class="t g" style="left:1439px;top:738px">Прием на комиссию</div>
<div class="abs" style="left:20px;top:765px;width:1606px;height:33px;background:#f9f9f9"></div>
<div class="abs" style="left:20px;top:798px;width:1606px;height:1px;background:#e4e4e4"></div>
<svg class="abs" style="left:65px;top:775px" width="21" height="16" viewBox="0 0 21 16"><rect x="0.5" y="0.5" width="15" height="12" fill="#fff" stroke="#8797ad" stroke-width="1"/><path d="M4 3.5 H12 M4 6.5 H12 M4 9.5 H10" stroke="#8e9aab" stroke-width="1.1"/><path d="M10.5 10.9 L12.9 13.7 L18 7.3" fill="none" stroke="#0c7d0c" stroke-width="3.4" stroke-linecap="round" stroke-linejoin="round"/><path d="M10.5 10.9 L12.9 13.7 L18 7.3" fill="none" stroke="#2cc22c" stroke-width="2" stroke-linecap="round" stroke-linejoin="round"/></svg>
<div class="t n g" style="left:94px;top:772px">ТД00-000027</div>
<div class="t n g" style="left:230px;top:772px">13.05.2…</div>
<div class="t n g" style="right:1205px;top:772px">11 008,00</div>
<div class="t g" style="left:443px;top:772px">База &quot;Электрото…</div>
<div class="t g" style="left:609px;top:772px">Закрыт</div>
<div class="t n g" style="right:517px;top:772px">100</div>
<div class="t n g" style="right:377px;top:772px">100</div>
<div class="t n g" style="left:1367px;top:772px">RUB</div>
<div class="t g" style="left:1439px;top:772px">Закупка у поставщика</div>
<div class="abs" style="left:20px;top:799px;width:1606px;height:33px;background:#fff"></div>
<div class="abs" style="left:20px;top:832px;width:1606px;height:1px;background:#e4e4e4"></div>
<svg class="abs" style="left:65px;top:809px" width="21" height="16" viewBox="0 0 21 16"><rect x="0.5" y="0.5" width="15" height="12" fill="#fff" stroke="#8797ad" stroke-width="1"/><path d="M4 3.5 H12 M4 6.5 H12 M4 9.5 H10" stroke="#8e9aab" stroke-width="1.1"/><path d="M10.5 10.9 L12.9 13.7 L18 7.3" fill="none" stroke="#0c7d0c" stroke-width="3.4" stroke-linecap="round" stroke-linejoin="round"/><path d="M10.5 10.9 L12.9 13.7 L18 7.3" fill="none" stroke="#2cc22c" stroke-width="2" stroke-linecap="round" stroke-linejoin="round"/></svg>
<div class="t n k" style="left:94px;top:806px">ТД00-000029</div>
<div class="t n k" style="left:230px;top:806px">01.06.2…</div>
<div class="t n k" style="right:1205px;top:806px">178 000,00</div>
<div class="t k" style="left:443px;top:806px">База &quot;Электрото…</div>
<div class="t r" style="left:609px;top:806px">Готов к поступлению</div>
<div class="t n r" style="left:793px;top:806px">05.06.2015</div>
<div class="t n k" style="left:1367px;top:806px">RUB</div>
<div class="t k" style="left:1439px;top:806px">Прием на комиссию</div>
<div class="abs" style="left:20px;top:833px;width:1606px;height:33px;background:#fdf1c6"></div>
<div class="abs" style="left:20px;top:866px;width:1606px;height:1px;background:#e4e4e4"></div>
<div class="abs" style="left:53px;top:833px;width:1px;height:33px;background:#fff"></div>
<div class="abs" style="left:219px;top:833px;width:1px;height:33px;background:#fff"></div>
<div class="abs" style="left:312px;top:833px;width:1px;height:33px;background:#fff"></div>
<div class="abs" style="left:432px;top:833px;width:1px;height:33px;background:#fff"></div>
<div class="abs" style="left:598px;top:833px;width:1px;height:33px;background:#fff"></div>
<div class="abs" style="left:782px;top:833px;width:1px;height:33px;background:#fff"></div>
<div class="abs" style="left:938px;top:833px;width:1px;height:33px;background:#fff"></div>
<div class="abs" style="left:1029px;top:833px;width:1px;height:33px;background:#fff"></div>
<div class="abs" style="left:1120px;top:833px;width:1px;height:33px;background:#fff"></div>
<div class="abs" style="left:1260px;top:833px;width:1px;height:33px;background:#fff"></div>
<div class="abs" style="left:1357px;top:833px;width:1px;height:33px;background:#fff"></div>
<div class="abs" style="left:1428px;top:833px;width:1px;height:33px;background:#fff"></div>
<div class="abs" style="left:220px;top:833px;width:92px;height:33px;background:#fde38e"></div>
<svg class="abs" style="left:65px;top:843px" width="21" height="16" viewBox="0 0 21 16"><rect x="0.5" y="0.5" width="15" height="12" fill="#fff" stroke="#8797ad" stroke-width="1"/><path d="M4 3.5 H12 M4 6.5 H12 M4 9.5 H10" stroke="#8e9aab" stroke-width="1.1"/><path d="M10.5 10.9 L12.9 13.7 L18 7.3" fill="none" stroke="#0c7d0c" stroke-width="3.4" stroke-linecap="round" stroke-linejoin="round"/><path d="M10.5 10.9 L12.9 13.7 L18 7.3" fill="none" stroke="#2cc22c" stroke-width="2" stroke-linecap="round" stroke-linejoin="round"/></svg>
<div class="t n k" style="left:94px;top:840px">ТД00-000034</div>
<div class="t n k" style="left:230px;top:840px">01.09.2…</div>
<div class="t n k" style="right:1205px;top:840px">147,50</div>
<div class="t k" style="left:443px;top:840px">Гознак</div>
<div class="t r" style="left:609px;top:840px">Готов к поступлению</div>
<div class="t n r" style="left:793px;top:840px">01.09.2017</div>
<div class="t n k" style="left:1367px;top:840px">RUB</div>
<div class="t k" style="left:1439px;top:840px">Прием на комиссию</div>
<div class="abs" style="left:22px;top:95px;width:405px;height:416px;background:#e6e6e6;border-radius:4px"></div>
<div class="abs" style="left:25px;top:98px;width:399px;height:410px;background:#fff;border:1px solid #5f5f5f"></div>
<div class="t" style="left:46px;top:106px;color:#333">Все открытые</div>
<div class="t" style="left:46px;top:140px;color:#333">Все ожидающие оплаты</div>
<div class="abs" style="left:26px;top:167px;width:397px;height:34px;background:#facc21"></div>
<div class="t" style="left:46px;top:174px;color:#333">Все ожидающие исполнения</div>
<div class="t" style="left:46px;top:208px;color:#333">Ожидается согласование</div>
<div class="t" style="left:46px;top:242px;color:#333">Ожидается аванс (до подтверждения)</div>
<div class="t" style="left:46px;top:276px;color:#333">Ожидается подтверждение</div>
<div class="t" style="left:46px;top:310px;color:#333">Ожидается предоплата (до приобретения)</div>
<div class="t" style="left:46px;top:344px;color:#333">Готов к поступлению</div>
<div class="t" style="left:46px;top:378px;color:#333">Ожидается поступление</div>
<div class="t" style="left:46px;top:412px;color:#333">Ожидается оплата (после поступления)</div>
<div class="t" style="left:46px;top:446px;color:#333">Готов к закрытию</div>
<div class="t" style="left:46px;top:480px;color:#333">Закрыт</div>
</body></html>
